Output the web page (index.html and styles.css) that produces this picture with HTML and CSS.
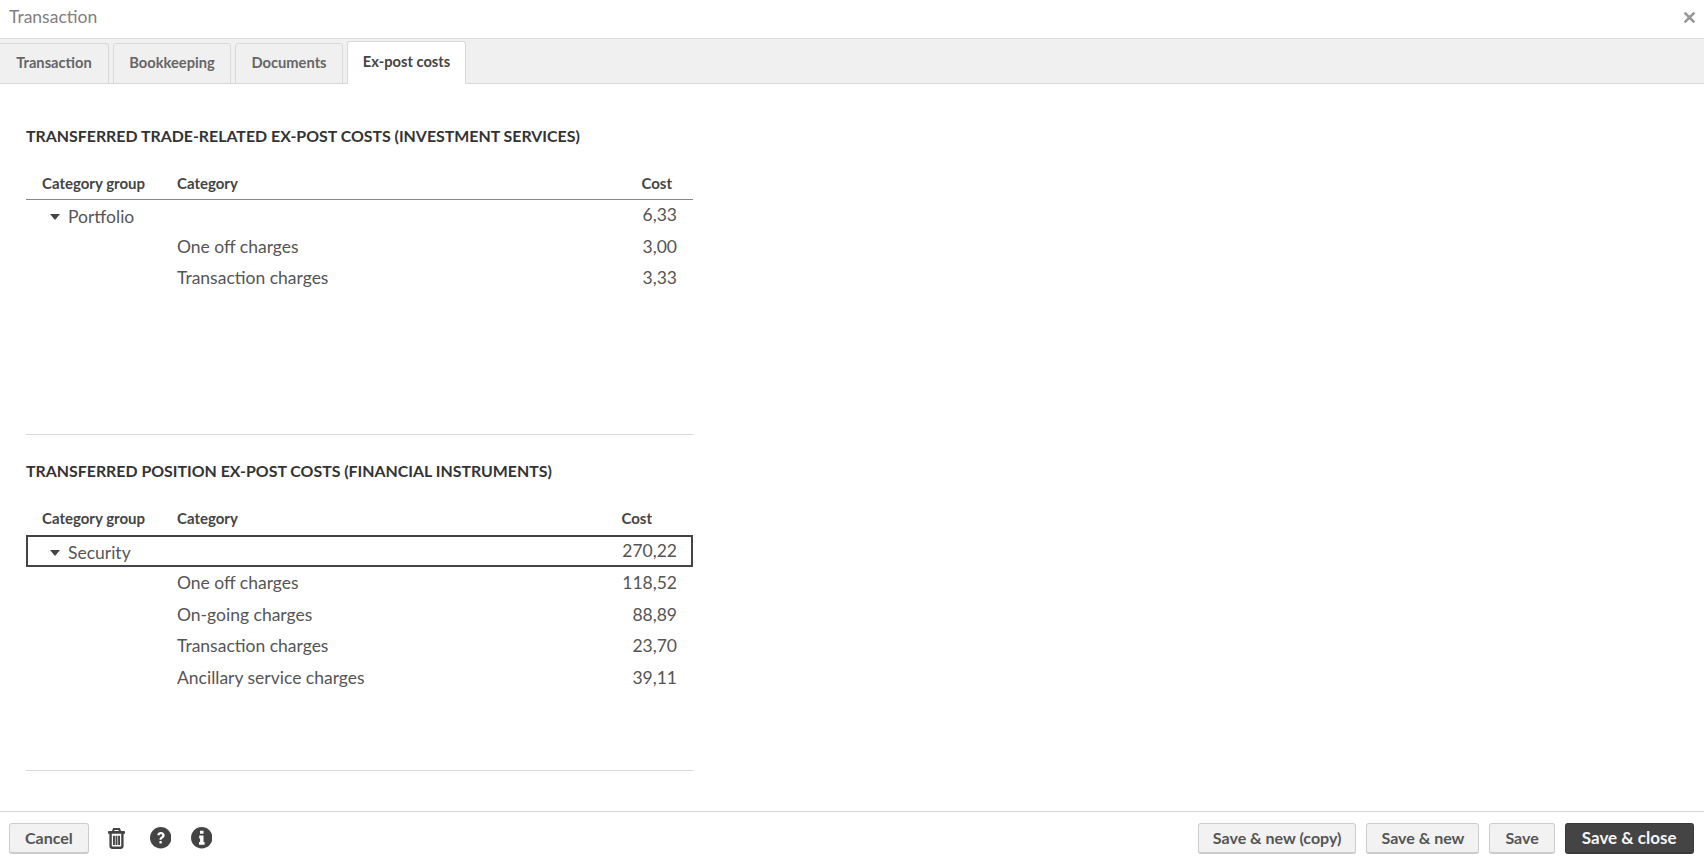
FILE: index.html
```html
<!DOCTYPE html>
<html lang="en">
<head>
    <meta charset="UTF-8">
    <title>Transaction</title>
    <link rel="stylesheet" href="styles.css">
</head>
<body>
    <div class="title-bar">
        <span class="title">Transaction</span>
        <svg class="close" viewBox="0 0 12 12" width="13" height="13"><path d="M1.500 1.500l9 9M10.500 1.500l-9 9"/></svg>
    </div>

    <div class="tabs">
        <div class="tab first">Transaction</div>
        <div class="tab second">Bookkeeping</div>
        <div class="tab third">Documents</div>
        <div class="tab active">Ex-post costs</div>
    </div>

    <div class="content">
        <section class="cost-section trade">
            <h2>Transferred trade-related ex-post costs (investment services)</h2>
            <table>
                <thead>
                    <tr>
                        <th class="col-group">Category group</th>
                        <th class="col-cat">Category</th>
                        <th class="col-cost">Cost</th>
                    </tr>
                </thead>
                <tbody>
                    <tr>
                        <td class="col-group"><span class="caret"></span>Portfolio</td>
                        <td></td>
                        <td class="col-cost">6,33</td>
                    </tr>
                    <tr><td></td><td>One off charges</td><td class="col-cost">3,00</td></tr>
                    <tr><td></td><td>Transaction charges</td><td class="col-cost">3,33</td></tr>
                </tbody>
            </table>
        </section>

        <section class="cost-section position">
            <h2>Transferred position ex-post costs (financial instruments)</h2>
            <table>
                <thead>
                    <tr>
                        <th class="col-group">Category group</th>
                        <th class="col-cat">Category</th>
                        <th class="col-cost">Cost</th>
                    </tr>
                </thead>
                <tbody>
                    <tr class="selected">
                        <td class="col-group"><span class="caret"></span>Security</td>
                        <td></td>
                        <td class="col-cost">270,22</td>
                    </tr>
                    <tr><td></td><td>One off charges</td><td class="col-cost">118,52</td></tr>
                    <tr><td></td><td>On-going charges</td><td class="col-cost">88,89</td></tr>
                    <tr><td></td><td>Transaction charges</td><td class="col-cost">23,70</td></tr>
                    <tr><td></td><td>Ancillary service charges</td><td class="col-cost">39,11</td></tr>
                </tbody>
            </table>
        </section>
    </div>

    <div class="footer">
        <button class="btn cancel">Cancel</button>
        <svg class="icon trash" viewBox="0 0 18 22" width="17" height="21">
            <path fill-rule="evenodd" d="M5.500 0h7l1.300 3H17a1 1 0 0 1 1 1V6h-1.500v13a3 3 0 0 1-3 3h-9a3 3 0 0 1-3-3V6H0V4a1 1 0 0 1 1-1h3.200zM7 2l-.4 1h4.800L11 2zM4 6v13c0 .3.200.5.500.5h9c.3 0 .5-.2.500-.5V6zM5.300 8h2v10h-2zM8 8h2v10H8zM10.700 8h2v10h-2z"/>
        </svg>
        <svg class="icon help" viewBox="0 0 22 22" width="21.500" height="21.500">
            <circle cx="11" cy="11" r="11"/>
            <path class="cut" d="M7.400 8.300C7.700 6.300 9.200 5.200 11.200 5.200c2.200 0 3.800 1.400 3.800 3.200 0 1.500-.8 2.300-1.900 3-.8.500-1.100.8-1.100 1.600H9.700c0-1.700.6-2.400 1.700-3.100.8-.5 1.200-.8 1.200-1.400 0-.7-.6-1.100-1.400-1.100-.9 0-1.400.5-1.600 1.300zM9.700 14.200H12V17H9.700z"/>
        </svg>
        <svg class="icon help" viewBox="0 0 22 22" width="21.500" height="21.500">
            <circle cx="11" cy="11" r="11"/>
            <path class="cut" d="M9.200 3.800h3.600v3.200H9.200zM8.400 8.800h4.400v6.500h1.100v2.900H8.200v-2.900h1.100v-3.600H8.400z"/>
        </svg>
        <div class="footer-right">
            <button class="btn">Save &amp; new (copy)</button>
            <button class="btn">Save &amp; new</button>
            <button class="btn save">Save</button>
            <button class="btn primary">Save &amp; close</button>
        </div>
    </div>
</body>
</html>
```

FILE: styles.css
```css
html, body {
    margin: 0;
    height: 100%;
}
body {
    font-family: Lato, "Open Sans", sans-serif;
    color: #444;
    background: white;
    display: flex;
    flex-direction: column;
    height: 864px;
    overflow: hidden;
}
.title-bar {
    height: 38px;
    flex: none;
    display: flex;
    align-items: center;
    justify-content: space-between;
    padding: 0 9px;
    border-bottom: 1px solid #ddd;
}
.title {
    font-size: 17.500px;
    color: #808080;
    margin-top: -6px;
}
.close {
    margin-top: -4px;
    margin-right: -1px;
}
.close path {
    stroke: #999;
    stroke-width: 2.600;
    fill: none;
}
.tabs {
    height: 44px;
    flex: none;
    display: flex;
    align-items: flex-end;
    background: #f0f0f0;
    border-bottom: 1px solid #d8d8d8;
}
.tab {
    height: 41px;
    box-sizing: border-box;
    padding-bottom: 3px;
    margin-bottom: -1px;
    margin-right: 3px;
    border: 1px solid #d8d8d8;
    border-radius: 3px 3px 0 0;
    display: flex;
    align-items: center;
    justify-content: center;
    font-size: 14.700px;
    font-weight: bold;
    color: #666;
}
.tab.first {
    width: 109px;
    margin-right: 4px;
    border-left: none;
    border-top-left-radius: 0;
}
.tab.second {
    width: 118px;
    margin-right: 4px;
}
.tab.third {
    width: 108px;
    margin-right: 4px;
}
.tab.active {
    width: 119px;
    height: 43px;
    padding-bottom: 4px;
    background: white;
    border-bottom-color: white;
    color: #444;
}
.content {
    flex: 1;
    padding: 0 26px;
    width: 667px;
}
.cost-section {
    border-bottom: 1px solid #d8d8d8;
    box-sizing: border-box;
}
.cost-section.trade {
    height: 351px;
}
.cost-section.position {
    height: 336px;
}
h2 {
    margin: 0;
    padding-top: 35px;
    height: 33px;
    line-height: 33px;
    font-size: 15.900px;
    font-weight: bold;
    text-transform: uppercase;
    color: #333;
}
.cost-section.position h2 {
    padding-top: 19px;
}
table {
    width: 100%;
    border-collapse: collapse;
    table-layout: fixed;
    margin-top: 16px;
}
th {
    box-sizing: border-box;
    height: 31px;
    padding: 0;
    font-size: 15px;
    font-weight: bold;
    text-align: left;
    color: #444;
    border-bottom: 1px solid #888;
}
td {
    box-sizing: border-box;
    height: 31.500px;
    padding: 0;
    font-size: 17.500px;
    color: #555;
}
td.col-group {
    padding-top: 2px;
}
tbody tr:first-child .col-cost {
    padding-bottom: 2px;
}
.col-group {
    width: 151px;
    padding-left: 16px;
}
.col-cost {
    width: 136px;
    padding-right: 16px;
    text-align: right;
}
th.col-cost {
    padding-right: 21px;
}
.position th.col-cost {
    padding-right: 41px;
}
.position th {
    height: 32px;
    padding-bottom: 2px;
    border-bottom: none;
}
.caret {
    display: inline-block;
    width: 0;
    height: 0;
    margin: 0 8px 3px 8px;
    border-left: 5.500px solid transparent;
    border-right: 5.500px solid transparent;
    border-top: 6px solid #444;
}
.selected td {
    height: 32px;
}
.selected {
    outline: 2px solid #444;
    outline-offset: -2px;
}
.footer {
    height: 52px;
    flex: none;
    display: flex;
    align-items: center;
    padding: 0 9px;
    border-top: 1px solid #d8d8d8;
}
.footer-right {
    margin-left: auto;
    display: flex;
    gap: 10px;
    margin-right: 1.500px;
}
.btn {
    height: 31px;
    padding: 0 14px;
    font-family: inherit;
    font-size: 16px;
    font-weight: bold;
    color: #555;
    background: #f2f2f2;
    border: 1px solid #ccc;
    border-bottom-width: 2px;
    border-radius: 3px;
}
.btn.cancel {
    padding: 0 15px;
}
.btn.save {
    padding: 0 15px;
}
.btn.primary {
    padding: 0 16px;
    font-size: 17px;
    color: #f4f4f4;
    background: #444;
    border-color: #3a3a3a;
}
.icon {
    fill: #444;
    flex: none;
}
.trash {
    margin-left: 19px;
}
.help {
    margin-left: 25px;
}
.help + .help {
    margin-left: 19.500px;
}
.cut {
    fill: white;
}
```
